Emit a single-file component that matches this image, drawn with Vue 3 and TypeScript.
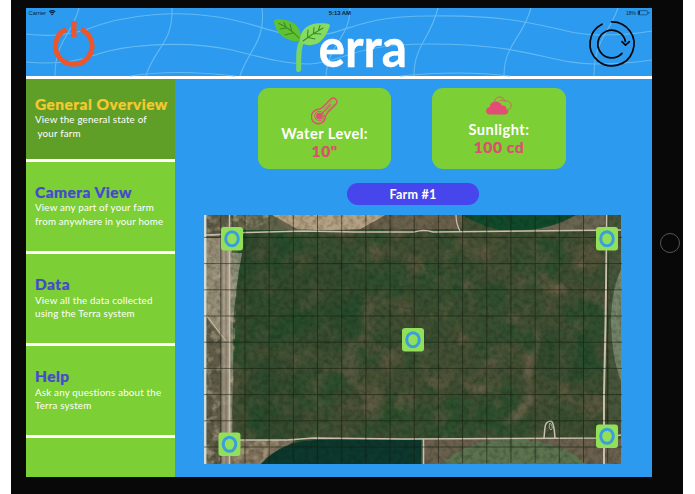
<script setup lang="ts">
interface NavItem {
  title: string
  lines: string[]
  cls: string
}

const items: NavItem[] = [
  { title: 'General Overview', lines: ['View the general state of', '\u00a0your farm'], cls: 'overview' },
  { title: 'Camera View', lines: ['View any part of your farm', 'from anywhere in your home'], cls: 'camera' },
  { title: 'Data', lines: ['View all the data collected', 'using the Terra system'], cls: 'data' },
  { title: 'Help', lines: ['Ask any questions about the', 'Terra system'], cls: 'help' },
]

const columns = Array.from({ length: 17 }, (_, i) => 16.8 + i * 24.18)
const rows = Array.from({ length: 9 }, (_, i) => 22.4 + i * 26.2)

const sensors = [
  { x: 17, y: 12 },
  { x: 392, y: 12 },
  { x: 198, y: 113 },
  { x: 14.5, y: 217.5 },
  { x: 392, y: 209.5 },
]
</script>

<template>
  <div class="device">
    <div class="screen">
      <header class="header">
        <svg class="header-art" viewBox="26 8 626 68" width="626" height="68">
          <g fill="none" stroke="#63b9f2" stroke-width="1.1">
            <path d="M26 34 Q58 38 85 30 C130 12 180 12 210 16 C250 20 275 36 305 36 C350 36 350 16 430 16 C540 14 555 35 600 35 Q630 35 652 31" />
            <path d="M26 62 Q65 66 95 55 C130 43 190 41 232 50 C270 60 290 64 310 64 C345 62 350 44 430 44 C530 44 550 64 595 64 Q625 64 652 60" />
            <path d="M130 76 Q175 69 235 76 M400 76 Q460 70 510 76" />
            <path d="M79 8 C72 36 55 40 55 76 M172 8 C173 44 154 48 146 76 M262 8 C266 42 248 50 240 76 M350 8 C350 38 328 44 326 76 M438 8 C430 40 414 45 414 76 M531 8 C522 40 504 44 504 76 M618 8 C608 36 594 40 594 76" />
          </g>

          <g fill="none" stroke="#ed552c">
            <path d="M66.4 29.2 A18.3 18.3 0 1 0 81 29.2" stroke-width="5" />
            <path d="M73.8 21 V37" stroke-width="5.4" />
          </g>

          <g stroke-linecap="round">
            <path d="M298.7 69.5 C299 58 297.5 49 302 41" fill="none" stroke="#78d761" stroke-width="5" />
            <path d="M274 22 C274 19 277 19 281 19.5 C293 20 301 27 301 37 C300 42 296 42 291 40.5 C280 37 276 31 274 22Z" fill="#5ec232" />
            <path d="M330 26 C330 23.5 327 23.5 323 23.3 C309 22 300 29 300 41 C305 47 316 46 321 41 C326 36 328 31 330 26Z" fill="#86db62" />
            <g fill="none" stroke="#3e8a23" stroke-width="1.1">
              <path d="M279 23.5 Q291 29 299 38 M284 22.5 L286 27 M290 24 L291.5 30.5 M280 29 L286.5 28 M285 35 L293 33" />
              <path d="M303 41 Q312 34 323 28 M308 30 L307.5 37 M314 27.5 L313.5 33 M320 25.5 L318.5 30 M308 37.5 L315 39 M314 33.5 L321 34" />
            </g>
          </g>
          <text class="logo" x="318.5" y="67.3" textLength="88.5" lengthAdjust="spacingAndGlyphs">erra</text>

          <g fill="none" stroke="#05070b" stroke-width="1.7" stroke-linecap="round" stroke-linejoin="round">
            <path d="M611.5 21.8 A22 22 0 1 1 602 24.2" />
            <path d="M622 53.4 A13.9 13.9 0 1 1 625.4 41.5" />
            <path d="M622 41.7 L625.5 45.2 L629.4 41.7" />
          </g>

          <g fill="none" stroke="#092642">
            <path d="M49.2 11.7 Q52.2 9.4 55.2 11.7 M50.3 13 Q52.2 11.6 54.1 13" stroke-width="1.3" />
            <path d="M51.3 14 L52.2 15.2 L53.1 14Z" fill="#092642" stroke-width=".4" />
            <rect x="638" y="10.6" width="9.4" height="4.2" rx=".8" stroke-width=".5" />
            <path d="M648.8 12 V13.6" stroke-width=".8" />
            <rect x="638.4" y="11" width="1.6" height="3.4" fill="#092642" stroke="none" />
          </g>
          <g class="status">
            <text x="28.5" y="15" textLength="17.5" lengthAdjust="spacingAndGlyphs">Carrier</text>
            <text class="clock" x="328.7" y="15" textLength="22.3" lengthAdjust="spacingAndGlyphs">5:13 AM</text>
            <text x="626" y="15" textLength="10" lengthAdjust="spacingAndGlyphs">18%</text>
          </g>
        </svg>
      </header>

      <div class="body">
        <nav class="sidebar">
          <section v-for="item in items" :key="item.title" class="item" :class="item.cls">
            <h2>{{ item.title }}</h2>
            <p v-for="line in item.lines" :key="line">{{ line }}</p>
          </section>
          <div class="rest"></div>
        </nav>

        <main class="main">
          <div class="cards">
            <div class="card water">
              <svg width="28" height="28" viewBox="0 0 28 28">
                <g fill="none" stroke="#e34d75" stroke-linecap="round">
                  <path d="M3.6 13.8 A7 7 0 1 0 14.3 20.4 Q15 17.2 17.4 14.8 L25.1 7.1 A3.7 3.7 0 0 0 19.8 2 L12.2 9.8 Q9.8 12.2 7.4 12.2 Q5.2 12.4 3.6 13.8Z" stroke-width="1.4" />
                  <circle cx="8.4" cy="19.1" r="4.7" stroke-width=".9" />
                  <path d="M8.4 19.1 L19.7 7.7" stroke-width="1.2" />
                  <path d="M13 12.2 L21.2 3.9 M15.3 15 L23.4 6.7" stroke-width=".5" />
                </g>
                <circle cx="8.4" cy="19.1" r="3.4" fill="#e34d75" />
              </svg>
              <span class="label">Water Level:</span>
              <strong>10"</strong>
            </div>
            <div class="card sun">
              <svg width="28" height="20" viewBox="0 0 28 20">
                <path d="M9.8 5.3 C10 0 18.2 -.8 20 5 C25 3.8 28.6 9.4 24.3 13.3 Q23.2 14.2 22 14.2 M14.5 4.7 Q17 3.1 20 5" fill="none" stroke="#e34d75" stroke-width=".8" />
                <path d="M5 18.6 C-.3 18.6 -.2 11.2 4.9 11.3 C4.4 4.2 14.8 3.3 16.8 9.6 C20.1 9 21.8 11.4 21.3 13.2 C24.6 14.2 23.4 18.6 20 18.6Z" fill="#e34d75" />
              </svg>
              <span class="label">Sunlight:</span>
              <strong>100 cd</strong>
            </div>
          </div>

          <div class="pill">Farm #1</div>

          <div class="map">
            <svg width="420" height="249" viewBox="0 0 420 249">
              <defs>
                <filter id="moss" x="0" y="0" width="100%" height="100%" color-interpolation-filters="sRGB">
                  <feTurbulence type="fractalNoise" baseFrequency=".022" numOctaves="5" seed="8" />
                  <feColorMatrix values="0 0 0 0 .14  0 0 0 0 .31  0 0 0 0 .17  0 0 0 3 -1.15" />
                </filter>
                <filter id="loam" x="0" y="0" width="100%" height="100%" color-interpolation-filters="sRGB">
                  <feTurbulence type="fractalNoise" baseFrequency=".04" numOctaves="4" seed="21" />
                  <feColorMatrix values="0 0 0 0 .45  0 0 0 0 .38  0 0 0 0 .29  0 0 0 3 -1.5" />
                </filter>
                <filter id="grain" x="0" y="0" width="100%" height="100%" color-interpolation-filters="sRGB">
                  <feTurbulence type="fractalNoise" baseFrequency=".2" numOctaves="3" seed="3" />
                  <feColorMatrix values="0 0 0 0 .05  0 0 0 0 .1  0 0 0 0 .05  0 0 0 2 -.8" />
                </filter>
                <filter id="dust" x="0" y="0" width="100%" height="100%" color-interpolation-filters="sRGB">
                  <feTurbulence type="fractalNoise" baseFrequency=".12" numOctaves="3" seed="17" />
                  <feColorMatrix values="0 0 0 0 .76  0 0 0 0 .69  0 0 0 0 .58  0 0 0 4 -1.9" />
                </filter>
                <filter id="soften"><feGaussianBlur stdDeviation="2.5" /></filter>
                <clipPath id="photo"><path d="M0 0H417V249H0Z" /></clipPath>
                <clipPath id="verge"><path d="M0 0H75L48 15H35L32 90L28 225H83L55 249H0Z" /></clipPath>
              </defs>
              <g clip-path="url(#photo)">
                <rect width="417" height="249" fill="#434f33" />
                <rect width="417" height="249" filter="url(#moss)" opacity=".7" />
                <rect width="417" height="249" filter="url(#loam)" opacity=".6" />
                <g filter="url(#soften)" fill="#1f452b" opacity=".35">
                  <ellipse cx="60" cy="68" rx="32" ry="62" />
                  <ellipse cx="122" cy="89" rx="38" ry="48" />
                  <ellipse cx="70" cy="185" rx="30" ry="45" />
                  <ellipse cx="360" cy="140" rx="30" ry="28" />
                </g>
                <g filter="url(#soften)" fill="#927360" opacity=".6">
                  <path d="M330 107 L333 132 L324 141 L320 159 L326 171 L321 185 L306 202 L300 210 L318 203 L328 183 L326 165 L330 142 L337 127Z" />
                  <ellipse cx="354" cy="74" rx="8" ry="5" />
                  <ellipse cx="376" cy="49" rx="7" ry="4" />
                  <ellipse cx="277" cy="174" rx="12" ry="3" />
                  <ellipse cx="228" cy="167" rx="6" ry="3" />
                  <ellipse cx="147" cy="147" rx="9" ry="23" opacity=".4" />
                  <ellipse cx="170" cy="188" rx="11" ry="18" opacity=".4" />
                </g>
                <path d="M0 0H28V110L23 249H0Z" fill="#5f5b47" />
                <path d="M2 23H28V114L20 126L2 102Z" fill="#958c76" />
                <path d="M28 38H38Q32 70 29 110Q30 160 27 225H23Z" fill="#818870" />
                <path d="M29 0H75L98 15H30Z" fill="#65654c" />
                <path d="M68 0H182L157 14Q115 16 93 14Z" fill="#b5a183" />
                <path d="M182 0H258V14H157Z" fill="#6b614b" />
                <path d="M258 0H372Q347 14 320 15H295Q273 9 258 0Z" fill="#104a2a" />
                <path d="M372 0H402V15H327Q350 13 372 0Z" fill="#6a6550" />
                <path d="M405 0H417V249H405Z" fill="#47563a" />
                <path d="M417 55Q408 72 407 105Q408 145 417 166Z" fill="#738468" />
                <path d="M25 225H92L57 249H25Z" fill="#82745d" />
                <path d="M57 249Q78 225 114 225H217V249Z" fill="#0c382e" />
                <path d="M219 224H417V249H219Z" fill="#6a604d" />
                <path d="M238 249Q263 224 304 225Q355 223 382 249Z" fill="#5c734f" />
                <g clip-path="url(#verge)"><rect width="417" height="249" filter="url(#dust)" opacity=".5" /></g>
                <rect width="417" height="249" filter="url(#grain)" opacity=".3" />
                <g fill="none" stroke="#c9bfae">
                  <path d="M2 20 Q18 20 24 18 L100 16 L150 17 L210 17 Q220 14 229 17 L417 15" stroke-width="1.7" />
                  <path d="M21.8 30V249" stroke-width="9" stroke="#ad9f8b" opacity=".7" />
                  <path d="M18 0V249M22 12V249" stroke="#6d6556" stroke-width=".8" opacity=".8" />
                  <path d="M25.5 0V249" stroke-width="1.5" />
                  <path d="M403 0L401.5 110L400 180L400 249" stroke-width="2" />
                  <path d="M25 225L83 225L110 223L200 224L400 223L417 220" stroke-width="1.3" />
                  <path d="M219.5 224V249" stroke-width="1.6" />
                  <path d="M340 223L341 212Q342 206 347 206Q350 207 351 223" stroke-width="1.5" />
                  <path d="M346 208Q344 213 347 215Q350 212 346 208" stroke-width=".8" />
                  <path d="M3 101L22 126" stroke-width="1" />
                  <path d="M252 0Q252 9 256 16" stroke-width="1.2" />
                </g>
                <path d="M1.2 0V249" stroke="#d1ddd9" stroke-width="2.4" />
              </g>
              <g stroke="#151c0e" stroke-width=".8" opacity=".7">
                <path v-for="x in columns" :key="'c' + x" :d="`M${x} 0V248`" />
                <path v-for="y in rows" :key="'r' + y" :d="`M0 ${y}H418`" />
              </g>
              <g v-for="(s, i) in sensors" :key="i" :transform="`translate(${s.x} ${s.y})`">
                <rect width="22" height="23.6" rx="3" fill="#92e05a" />
                <ellipse cx="11" cy="11.8" rx="6.3" ry="7" fill="none" stroke="#3a9edb" stroke-width="3" />
              </g>
            </svg>
          </div>
        </main>
      </div>
    </div>
    <div class="home"></div>
  </div>
</template>

<style>
body {
  background: #fff;
  overflow: hidden;
}
</style>

<style scoped>
.device {
  box-sizing: border-box;
  width: 672px;
  height: 494px;
  margin-left: 11px;
  padding: 8px 3px 17px 15px;
  display: flex;
  align-items: center;
  gap: 8px;
  background: #080808;
  font-family: Lato, "Liberation Sans", sans-serif;
}
.screen {
  flex: none;
  width: 626px;
  height: 469px;
  background: #2c9aee;
}
.header {
  height: 68px;
  border-bottom: 3px solid #fff;
}
.header-art {
  display: block;
  overflow: visible;
}
.header-art g path {
  clip-path: none;
}
.logo {
  font: 700 53px Lato, "Noto Sans", sans-serif;
  fill: #fff;
  stroke: #fff;
  stroke-width: .4px;
}
.status {
  font: 6px "Liberation Sans", sans-serif;
  fill: #092642;
}
.clock {
  font-weight: 700;
}
.body {
  display: flex;
  height: 398px;
}
.sidebar {
  display: flex;
  flex-direction: column;
  width: 148.5px;
  flex: none;
}
.item {
  box-sizing: border-box;
  height: 92.1px;
  padding: 21.2px 0 0 9px;
  background: #7ccf35;
  border-bottom: 3.6px solid #fff;
  color: #fff;
  white-space: nowrap;
}
.overview {
  height: 83px;
  padding-top: 16.2px;
  background: #5f9e27;
}
.rest {
  flex: 1;
  background: #7ccf35;
}
h2 {
  margin: 0 0 .3px;
  font-size: 15.5px;
  line-height: 18px;
  font-weight: 900;
  letter-spacing: .45px;
  -webkit-text-stroke: .2px currentColor;
  color: #4549cf;
}
.overview h2 {
  color: #f5c92f;
}
p {
  margin: 0;
  font-size: 9.8px;
  line-height: 13.3px;
  letter-spacing: .18px;
}
.main {
  flex: 1;
}
.cards {
  display: flex;
  gap: 41px;
  padding: 9.3px 0 0 83.5px;
}
.card {
  box-sizing: border-box;
  display: flex;
  flex-direction: column;
  align-items: center;
  width: 133.3px;
  height: 81.2px;
  border-radius: 11px;
  background: #7ccf35;
}
.card svg {
  flex: none;
}
.water {
  padding-top: 8.7px;
}
.sun {
  padding-top: 8.2px;
}
.label {
  color: #fff;
  font-size: 14.7px;
  line-height: 18px;
  font-weight: 700;
  letter-spacing: .42px;
  white-space: nowrap;
}
.water .label {
  margin-top: -.7px;
}
.sun .label {
  margin-top: 3.7px;
}
.card strong {
  color: #d9516e;
  font-size: 15.6px;
  line-height: 18px;
  font-weight: 900;
  letter-spacing: .55px;
  -webkit-text-stroke: .2px currentColor;
}
.pill {
  width: 132.6px;
  height: 21.4px;
  margin: 14px 0 0 172.2px;
  border-radius: 11px;
  background: #4745ec;
  color: #fff;
  text-align: center;
  font-size: 12.6px;
  line-height: 23px;
  font-weight: 700;
  letter-spacing: .2px;
}
.map {
  margin: 10.1px 0 0 29.5px;
}
.map svg {
  display: block;
}
.home {
  box-sizing: border-box;
  flex: none;
  width: 20px;
  height: 20px;
  border: 1px solid #555;
  border-radius: 50%;
}
</style>
